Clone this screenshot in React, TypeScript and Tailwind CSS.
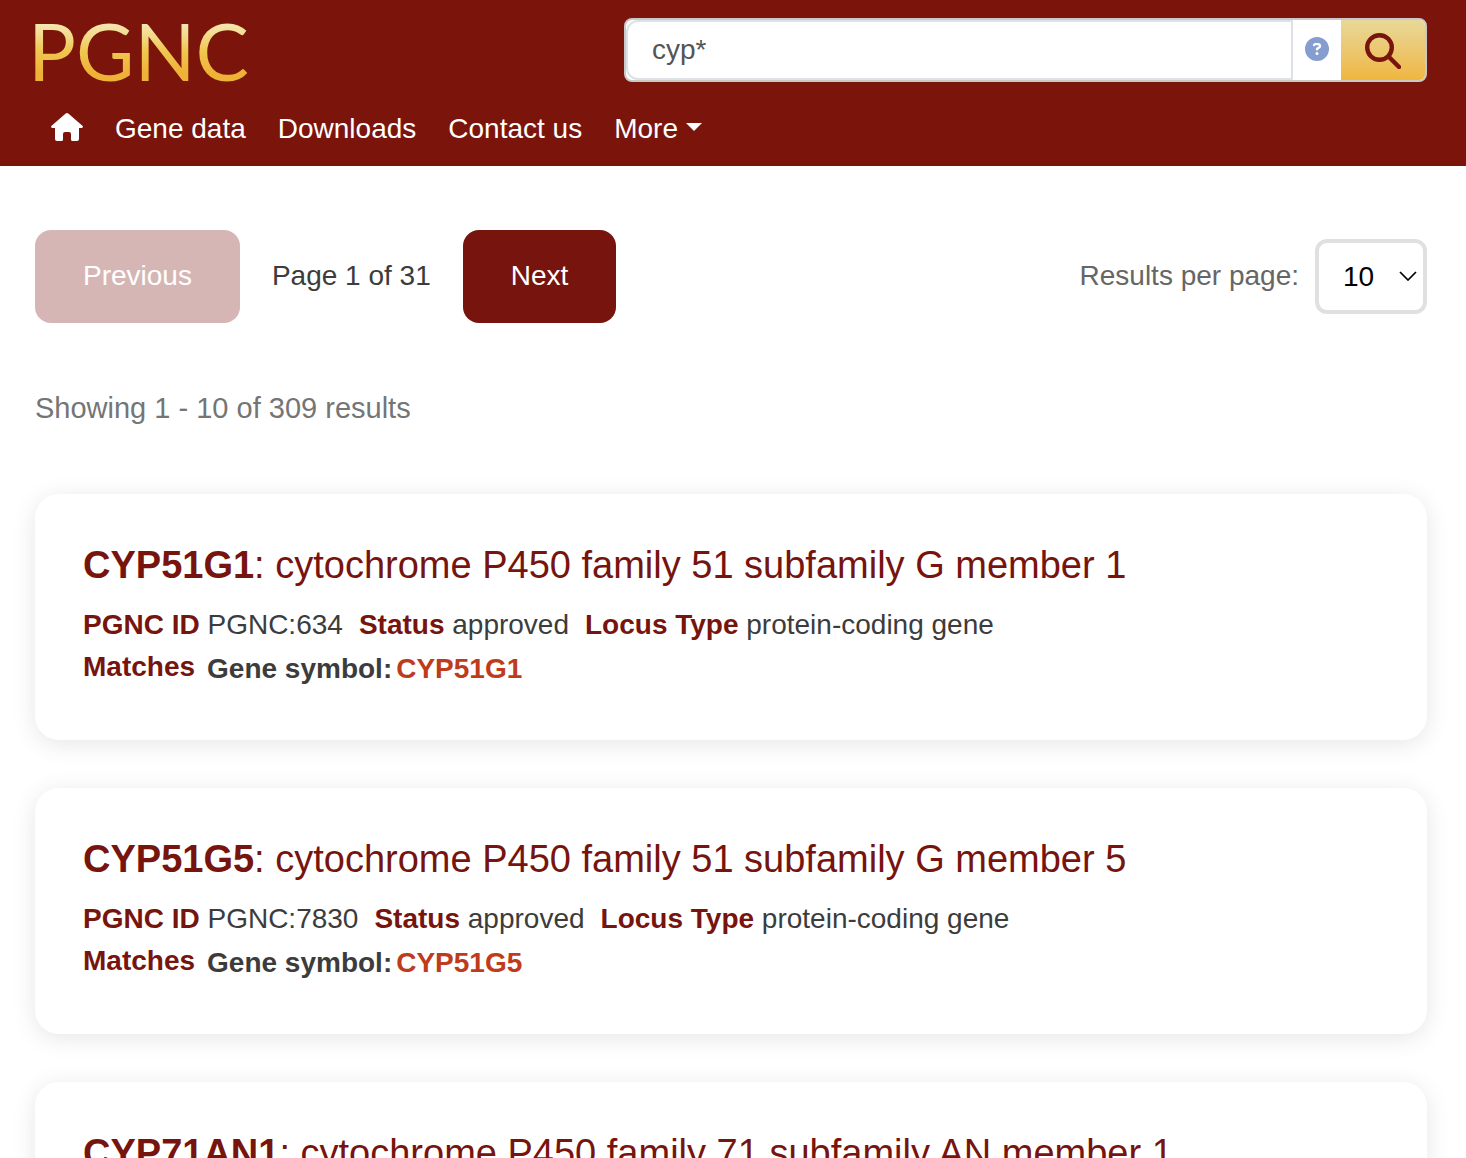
import React, { useState } from 'react';
import { FaCircleQuestion } from 'react-icons/fa6';

// --- TYPES ---
interface GeneResult {
  id: string;
  symbol: string;
  name: string;
  status: string;
  locusType: string;
}

// --- DATA ---
const TOTAL = 309;

const results: GeneResult[] = [
  { id: 'PGNC:634', symbol: 'CYP51G1', name: 'cytochrome P450 family 51 subfamily G member 1', status: 'approved', locusType: 'protein-coding gene' },
  { id: 'PGNC:7830', symbol: 'CYP51G5', name: 'cytochrome P450 family 51 subfamily G member 5', status: 'approved', locusType: 'protein-coding gene' },
  { id: 'PGNC:1021', symbol: 'CYP71AN1', name: 'cytochrome P450 family 71 subfamily AN member 1', status: 'approved', locusType: 'protein-coding gene' },
];

// --- ICONS ---
const HomeIcon = () => (
  <svg viewBox="0 0 32 28" className="h-7 w-8" fill="currentColor" aria-hidden="true">
    <path d="M14.7.6a2 2 0 0 1 2.6 0L31.400 12.800c1 .9.500 2.200-.8 2.200H28v11a2 2 0 0 1-2 2h-4.500a1.500 1.500 0 0 1-1.500-1.500V21a2 2 0 0 0-2-2h-4a2 2 0 0 0-2 2v5.500a1.500 1.500 0 0 1-1.500 1.500H6a2 2 0 0 1-2-2V15H1.400c-1.300 0-1.800-1.300-.8-2.200Z" />
  </svg>
);

const SearchIcon = () => (
  <svg viewBox="0 0 36 36" className="size-9" fill="none" stroke="currentColor" aria-hidden="true">
    <circle cx="14.500" cy="14.500" r="12.300" strokeWidth="4.400" />
    <path d="M23.500 23.500 34 34" strokeWidth="4.400" strokeLinecap="round" />
  </svg>
);

// --- COMPONENTS ---
const Header = () => {
  const [query, setQuery] = useState('cyp*');

  return (
    <header className="bg-[#7b150c] text-white">
      <div className="flex items-start justify-between pl-7 pr-[39px] pt-[18px]">
        <a href="#" className="bg-linear-to-b from-[#f6e7b0] from-10% via-[#f0c850] via-50% to-[#efb238] to-85% bg-clip-text font-[Lato,sans-serif] text-[80px] leading-[64px] text-transparent">PGNC</a>
        <form role="search" onSubmit={(e) => e.preventDefault()} className="flex h-16 w-[803px] overflow-hidden rounded-lg border-2 border-[#c9c9c9] bg-white">
          <input
            type="text"
            aria-label="Search"
            value={query}
            onChange={(e) => setQuery(e.target.value)}
            className="min-w-0 flex-1 rounded-l-xl border-2 border-[#dee2e6] bg-white px-6 text-[28px] text-[#555] outline-none"
          />
          <button type="button" aria-label="Search help" className="flex w-12 items-center justify-center pb-0.5 text-[#869dd0]">
            <FaCircleQuestion className="size-6" />
          </button>
          <button type="submit" aria-label="Search" className="flex w-[84px] items-center justify-center bg-linear-to-b from-[#e8d898] to-[#efb63d] pt-0.5 text-[#76140d]">
            <SearchIcon />
          </button>
        </form>
      </div>
      <nav className="flex items-center gap-8 px-[51px] pt-[25px] pb-[15px] text-[28px] leading-[44px]">
        <a href="#" aria-label="Home" className="pb-1"><HomeIcon /></a>
        <a href="#">Gene data</a>
        <a href="#">Downloads</a>
        <a href="#">Contact us</a>
        <button type="button" className="flex items-center gap-2">
          More
          <svg viewBox="0 0 16 8" className="mb-1 h-2 w-4" fill="currentColor" aria-hidden="true"><path d="M0 0h16L8 8Z" /></svg>
        </button>
      </nav>
    </header>
  );
};

const Pager = ({ perPage, onPerPage }: { perPage: number; onPerPage: (n: number) => void }) => (
  <div className="flex items-center justify-between">
    <div className="flex items-center gap-8">
      <button type="button" disabled className="rounded-2xl bg-[#d5b6b5] px-12 pt-6 pb-[26px] leading-[43px] text-white">Previous</button>
      <span className="pb-0.5 text-[#3c3c3c]">Page 1 of {Math.ceil(TOTAL / perPage)}</span>
      <button type="button" className="rounded-2xl bg-[#76140d] px-12 pt-6 pb-[26px] leading-[43px] text-white">Next</button>
    </div>
    <div className="flex items-center gap-4">
      <label htmlFor="per-page" className="pb-0.5 text-[#666]">Results per page:</label>
      <div className="relative">
        <select
          id="per-page"
          value={perPage}
          onChange={(e) => onPerPage(Number(e.target.value))}
          className="h-[75px] w-28 appearance-none rounded-xl border-4 border-[#e0e0e0] bg-white pl-6 text-black"
        >
          <option value={10}>10</option>
          <option value={25}>25</option>
          <option value={50}>50</option>
        </select>
        <svg viewBox="0 0 18 10" className="pointer-events-none absolute top-8 right-2.5 h-2.5 w-[18px]" fill="none" stroke="#000" strokeWidth="1.700" aria-hidden="true">
          <path d="m1 1 8 8 8-8" />
        </svg>
      </div>
    </div>
  </div>
);

const ResultCard = ({ gene }: { gene: GeneResult }) => (
  <article className="rounded-3xl bg-white p-12 leading-[42px] text-[#3c3c3c] shadow-[0_4px_24px_rgba(0,0,0,0.1)]">
    <h2 className="mb-4 text-[38px] leading-[46px] text-[#76140d]">
      <a href="#"><b>{gene.symbol}</b>: {gene.name}</a>
    </h2>
    <div className="flex flex-wrap gap-x-4">
      <span><b className="text-[#76140d]">PGNC ID</b> {gene.id}</span>
      <span><b className="text-[#76140d]">Status</b> {gene.status}</span>
      <span><b className="text-[#76140d]">Locus Type</b> {gene.locusType}</span>
    </div>
    <div className="mb-0.5 flex gap-3 font-bold">
      <span className="text-[#76140d]">Matches</span>
      <span className="flex gap-1 pt-0.5">
        <span>Gene symbol:</span>
        <span className="text-[#be3c1b]">{gene.symbol}</span>
      </span>
    </div>
  </article>
);

// --- APP ---
export default function App() {
  const [perPage, setPerPage] = useState(10);

  return (
    <div className="min-h-screen bg-white font-['Liberation_Sans',Arial,sans-serif]">
      <Header />
      <main className="pt-16 pr-[39px] pb-16 pl-[35px] text-[28px]">
        <Pager perPage={perPage} onPerPage={setPerPage} />
        <p className="my-16 text-[29px] leading-[43px] text-[#757575]">Showing 1 - {perPage} of {TOTAL} results</p>
        <div className="flex flex-col gap-12">
          {results.map((gene) => <ResultCard key={gene.id} gene={gene} />)}
        </div>
      </main>
    </div>
  );
}
